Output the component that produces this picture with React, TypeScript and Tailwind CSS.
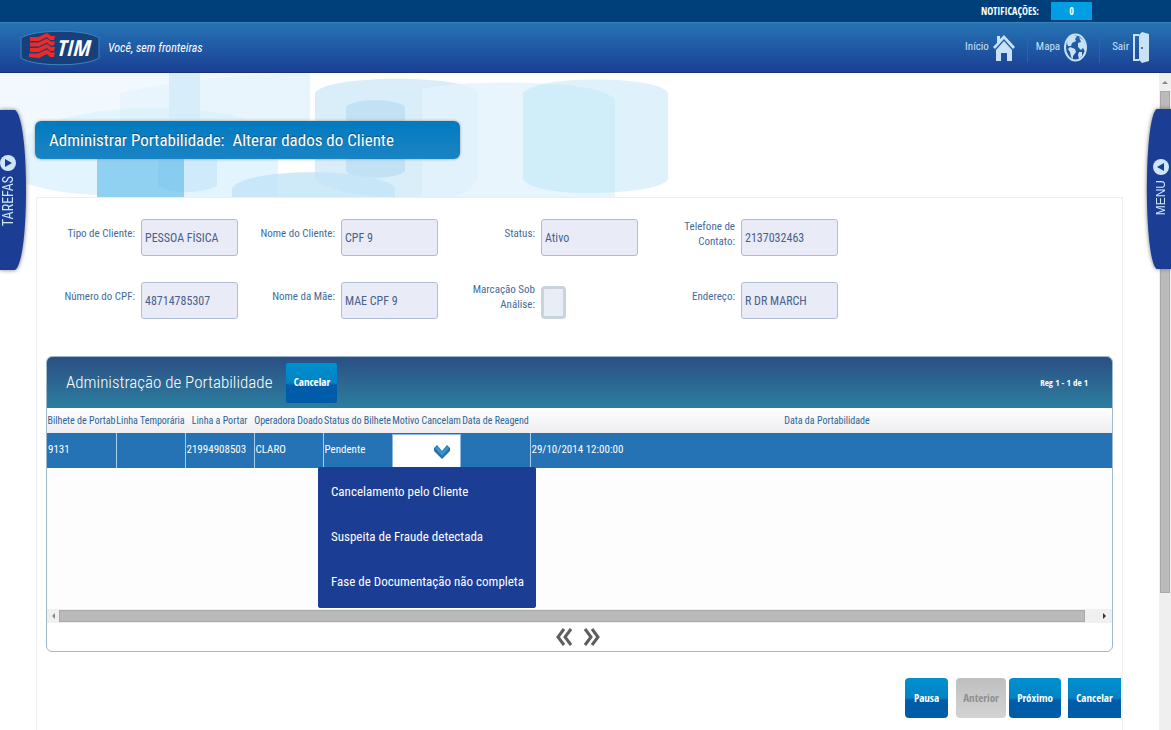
import { useState } from 'react';

const fields = [
  { id: 'tipo', label: 'Tipo de Cliente:', value: 'PESSOA FÍSICA' },
  { id: 'nome', label: 'Nome do Cliente:', value: 'CPF 9' },
  { id: 'status', label: 'Status:', value: 'Ativo' },
  { id: 'telefone', label: 'Telefone de Contato:', value: '2137032463', wrap: true },
  { id: 'cpf', label: 'Número do CPF:', value: '48714785307' },
  { id: 'mae', label: 'Nome da Mãe:', value: 'MAE CPF 9' },
  { id: 'analise', label: 'Marcação Sob Análise:', checkbox: true, wrap: true },
  { id: 'endereco', label: 'Endereço:', value: 'R DR MARCH' },
];

const columns = [
  'Bilhete de Portab',
  'Linha Temporária',
  'Linha a Portar',
  'Operadora Doado',
  'Status do Bilhete',
  'Motivo Cancelam',
  'Data de Reagend',
];

const motivos = ['Cancelamento pelo Cliente', 'Suspeita de Fraude detectada', 'Fase de Documentação não completa'];

function TimLogo() {
  return (
    <div className="relative h-9 w-20 shrink-0">
      <svg className="absolute inset-0" width="80" height="36" viewBox="0 0 80 36" fill="none">
        <path d="M1 8C14-1 66-1 79 8V28C66 37 14 37 1 28Z" fill="#163f7c" stroke="#3a86bd" />
        <g fill="#ee2a24">
          <path d="M10 7L18 7L27 3L31 6L35 6L34 10L30 10L27 7L19 11L10 11Z" />
          <path d="M10 12.500L18 12.500L27 8.500L31 11.500L35 11.500L34 15.500L30 15.500L27 12.500L19 16.500L10 16.500Z" />
          <path d="M10 18L18 18L27 14L31 17L35 17L34 21L30 21L27 18L19 22L10 22Z" />
          <path d="M9 23.500L18 23.500L27 19.500L31 22.500L35 22.500L34 27L30 27L27 24L19 28L9 27Z" />
        </g>
      </svg>
      <span className="absolute top-[3px] left-9 font-['Open_Sans_Condensed','Open_Sans',sans-serif] text-[22px] leading-7 font-bold text-white italic">
        TIM
      </span>
    </div>
  );
}

function HomeIcon() {
  return (
    <svg width="22" height="28" viewBox="0 0 22 28" fill="#c9e2f5">
      <path d="M0 13L4 9V2H7V5L11 1L22 13L20 15L11 5L2 15Z" />
      <path d="M3 16L11 7L19 16V27H14V19H8V27H3Z" />
    </svg>
  );
}

function GlobeIcon() {
  return (
    <svg width="23" height="29" viewBox="0 0 23 29">
      <ellipse cx="11.500" cy="14.500" rx="10.500" ry="13" fill="none" stroke="#c9e2f5" strokeWidth="2" />
      <path d="M4 6L9 2L13 3L11 6L12 8L8 10L7 13L4 13L3 10Z" fill="#c9e2f5" />
      <path d="M6 14L11 16L12 19L9 23L9 26L7 24L6 19L4 16Z" fill="#c9e2f5" />
      <path d="M15 4L19 7L22 13L21 18L19 15L17 17L14 14L14 10L17 9ZM15 19L18 19L18 23L15 26L14 22Z" fill="#c9e2f5" />
    </svg>
  );
}

function DoorIcon() {
  return (
    <svg width="16" height="31" viewBox="0 0 16 31">
      <path d="M6 3H1V28H6" fill="none" stroke="#c9e2f5" strokeWidth="2" />
      <path d="M6 3L9 0L16 2V29L9 31L6 28Z" fill="#c9e2f5" />
      <circle cx="9" cy="16" r="1" fill="#1b4f9c" />
    </svg>
  );
}

function Backdrop() {
  return (
    <svg className="absolute top-0 left-0" width="680" height="125" viewBox="0 0 680 125">
      <path d="M0 0H310V86H278V125H0Z" fill="#f1f9fe" />
      <path d="M120 20Q200 2 310 0V86H120Z" fill="#e8f5fc" />
      <rect x="169" width="31" height="50" fill="#d8edfa" />
      <path d="M28 62C70 26 240 26 278 62V125H28Z" fill="#d3effb" opacity=".5" />
      <path d="M0 100Q40 120 97 122V125H0Z" fill="#fff" />
      <path d="M315 20C325 1 470 1 478 20V106Q470 120 450 125H395Q330 122 315 106Z" fill="#daeefa" />
      <path d="M422 16C460 6 600 6 615 26V125H422Z" fill="#e2f3fc" opacity=".8" />
      <path d="M346 34C352 25 398 25 405 34V98C398 107 352 107 346 98Z" fill="#c2e1f4" />
      <path d="M184 85H217V113Q205 119 184 119Z" fill="#cfeafa" />
      <rect x="97" y="85" width="87" height="40" fill="#90d0f0" />
      <path d="M158 85H184V119Q170 119 158 113Z" fill="#88cdf0" />
      <path d="M232 115C245 94 380 94 395 115V125H232Z" fill="#c2e5f7" opacity=".8" />
      <path d="M523 20C533 2 660 2 668 20V106C660 124 533 124 523 106Z" fill="#dff1fb" />
      <path d="M523 20Q530 13 548 11Q600 13 615 26V119C570 122 530 118 523 106Z" fill="#d0edfa" />
    </svg>
  );
}

function ActionButton({ children, className = '', disabled }: { children: string; className?: string; disabled?: boolean }) {
  return (
    <button
      disabled={disabled}
      className={`h-10 shrink-0 font-['Open_Sans_Condensed','Open_Sans',sans-serif] text-[11px] font-bold ${
        disabled
          ? 'bg-linear-to-b from-[#bfbfbf] to-[#d3d3d3] text-[#8e8e8e]'
          : 'bg-linear-to-b from-[#0090cf] from-0% via-[#0084c6] via-50% to-[#005ca9] to-55% text-white'
      } ${className}`}
    >
      {children}
    </button>
  );
}

function SideTab({ side }: { side: 'left' | 'right' }) {
  const left = side === 'left';
  return (
    <button
      className={`absolute z-10 flex items-center justify-center ${
        left ? 'top-[109px] left-0 h-[162px] w-7' : 'top-[108px] right-0 h-[162px] w-[25px]'
      }`}
    >
      <svg
        className="absolute inset-0 h-full w-full overflow-visible drop-shadow-[0_0_2px_#777]"
        viewBox="0 0 28 162"
        preserveAspectRatio="none"
      >
        {left ? (
          <path d="M0 1H15C22 5 26 40 26 81S22 157 15 161H0Z" fill="#1b3d94" />
        ) : (
          <path d="M28 1H12C5 5 1 40 1 81S5 157 12 161H28Z" fill="#1b3d94" />
        )}
      </svg>
      <span className={`relative flex flex-col items-center gap-1 ${left ? 'mr-3' : 'mb-1 ml-1'}`}>
        <svg width="18" height="18" viewBox="0 0 18 18">
          <circle cx="9" cy="9" r="8" fill="#cfe6fa" />
          <path d={left ? 'M6 5L13 9L6 13Z' : 'M12 5L5 9L12 13Z'} fill="#1b3d94" />
        </svg>
        <span
          className={`rotate-180 leading-4 text-[#cfe6fa] [writing-mode:vertical-rl] ${
            left ? 'text-sm' : "font-['Liberation_Sans',sans-serif] text-xs"
          }`}
        >
          {left ? 'TAREFAS' : 'MENU'}
        </span>
      </span>
    </button>
  );
}

function Header() {
  return (
    <header>
      <div className="flex h-[22px] items-center justify-end gap-3 bg-[#00407a] pr-[79px] font-['Open_Sans_Condensed','Open_Sans',sans-serif] text-[10px] font-bold text-white">
        <span>NOTIFICAÇÕES:</span>
        <span className="flex h-[18px] w-[41px] items-center justify-center bg-[#009fe3]">0</span>
      </div>
      <div className="flex h-[51px] items-center border-t border-b border-t-[#3b82ba] border-b-[#12347c] bg-linear-to-b from-[#2674b4] to-[#1b3f94] pr-[22px] pl-5">
        <TimLogo />
        <span className="ml-2 text-xs text-white italic">Você, sem fronteiras</span>
        <nav className="ml-auto flex items-center text-[11px] text-[#c9e2f5]">
          <a href="#inicio" className="flex items-center gap-1 pr-3">
            Início <HomeIcon />
          </a>
          <a href="#mapa" className="flex items-center gap-1 border-l border-[#2765a9] pr-3 pl-2">
            Mapa <GlobeIcon />
          </a>
          <a href="#sair" className="flex items-center gap-1 border-l border-[#2765a9] pl-3">
            Sair <DoorIcon />
          </a>
        </nav>
      </div>
    </header>
  );
}

function PortabilityGrid() {
  const [motivo, setMotivo] = useState('');

  return (
    <section className="mx-[9px] mt-[37px] rounded-md border border-[#9fb8cb]">
      <div className="flex h-[51px] items-center rounded-t-[5px] bg-linear-to-b from-[#2b4f84] to-[#2b7e9f] pr-6 pl-[19px] text-white">
        <h2 className="font-['Roboto_Condensed_Light','Roboto_Condensed',sans-serif] text-[17px]">Administração de Portabilidade</h2>
        <ActionButton className="ml-[14px] w-[51px] rounded-xs">Cancelar</ActionButton>
        <span className="ml-auto font-['Open_Sans_Condensed','Open_Sans',sans-serif] text-[9px] font-bold">Reg 1 - 1 de 1</span>
      </div>
      <div className="h-[201px] bg-[#fdfdfd]">
        <table className="w-full table-fixed border-collapse">
          <thead>
            <tr className="h-[25px] bg-linear-to-b from-white to-[#ededf0] text-[10px] text-[#2c6496]">
              {columns.map((c) => (
                <th key={c} className="w-[69px] font-normal whitespace-nowrap">
                  {c}
                </th>
              ))}
              <th className="pl-3 font-normal">Data da Portabilidade</th>
            </tr>
          </thead>
          <tbody>
            <tr className="h-[35px] bg-[#2572b4] text-[11px] text-white">
              <td className="border-r border-[#a9cdea] px-px">9131</td>
              <td className="border-r border-[#a9cdea]" />
              <td className="border-r border-[#a9cdea] px-px">21994908503</td>
              <td className="border-r border-[#a9cdea] px-px">CLARO</td>
              <td className="px-px">Pendente</td>
              <td>
                <div className="relative">
                  <select
                    aria-label="Motivo Cancelamento"
                    value={motivo}
                    onChange={(e) => setMotivo(e.target.value)}
                    className="block h-[34px] w-full appearance-none border border-[#8ab6e6] bg-white pl-1 text-[#1b3d94]"
                  >
                    <option value="" />
                    {motivos.map((m) => (
                      <option key={m}>{m}</option>
                    ))}
                  </select>
                  <svg className="pointer-events-none absolute top-[11px] right-[11px]" width="16" height="14" viewBox="0 0 16 14">
                    <path d="M0 3L3 0L8 6L13 0L16 3V6L8 14L0 6Z" fill="#2c6fa5" />
                    <path d="M1 3L3 1L8 7L13 1L15 3L8 11Z" fill="#3596d6" />
                  </svg>
                  <ul className="absolute top-[33px] -left-[74px] z-10 w-[218px] rounded-xs border border-[#16409c] bg-[#1b3d94] py-[2px] text-[13px]">
                    {motivos.map((m) => (
                      <li key={m}>
                        <button onClick={() => setMotivo(m)} className="h-[45px] w-full pl-3 text-left whitespace-nowrap">
                          {m}
                        </button>
                      </li>
                    ))}
                  </ul>
                </div>
              </td>
              <td className="border-r border-[#a9cdea]" />
              <td className="px-px">29/10/2014 12:00:00</td>
            </tr>
          </tbody>
        </table>
      </div>
      <div className="flex h-[14px] items-center bg-[#f0f0f0]">
        <svg width="12" height="8" viewBox="0 0 12 8">
          <path d="M8 1L5 4L8 7Z" fill="#888" />
        </svg>
        <div className="mr-[11px] h-3 flex-1 border border-[#a8a8a8] bg-[#bababa]" />
        <svg width="16" height="8" viewBox="0 0 16 8">
          <path d="M7 1L10 4L7 7Z" fill="#333" />
        </svg>
      </div>
      <div className="flex h-7 items-center justify-center gap-3 pr-1">
        <button aria-label="Página anterior">
          <svg width="16" height="18" viewBox="0 0 16 18" fill="none" stroke="#5e5e5e" strokeWidth="3">
            <path d="M8 1L2 9L8 17M15 1L9 9L15 17" />
          </svg>
        </button>
        <button aria-label="Próxima página">
          <svg width="16" height="18" viewBox="0 0 16 18" fill="none" stroke="#5e5e5e" strokeWidth="3">
            <path d="M1 1L7 9L1 17M8 1L14 9L8 17" />
          </svg>
        </button>
      </div>
    </section>
  );
}

export default function App() {
  return (
    <div className="relative flex h-screen flex-col overflow-hidden bg-white font-['Roboto_Condensed','Liberation_Sans',sans-serif]">
      <Header />
      <SideTab side="left" />
      <SideTab side="right" />
      <div className="flex min-h-0 flex-1">
        <main className="relative flex min-w-0 flex-1 flex-col pr-9 pl-9">
          <Backdrop />
          <h1 className="relative mt-12 -ml-px h-[38px] w-[425px] rounded-md bg-linear-to-b from-[#007ac0] to-[#1a84c4] pl-[14px] text-[17px] leading-[38px] whitespace-pre text-white shadow-[0_0_3px_#999] [text-shadow:0_-1px_1px_#1238]">
            {'Administrar Portabilidade:  Alterar dados do Cliente'}
          </h1>
          <div className="relative mt-[38px] flex-1 border border-b-0 border-[#eeeeee] bg-white">
            <form className="mt-[21px] ml-px grid grid-cols-[repeat(4,200px)] gap-y-[26px] text-xs text-[#3f6b9b]">
              {fields.map((f) => (
                <div key={f.id} className="flex h-[37px] justify-end gap-[6px]">
                  <label
                    htmlFor={f.id}
                    className={`text-right text-[11px] leading-[15px] ${f.wrap ? 'w-[66px]' : 'mt-[7px] whitespace-nowrap'}`}
                  >
                    {f.label}
                  </label>
                  {f.checkbox ? (
                    <div className="w-[97px]">
                      <input
                        id={f.id}
                        type="checkbox"
                        className="mt-1 block h-[33px] w-[25px] appearance-none rounded-sm border-3 border-[#c9d3da] bg-[#e9edf6]"
                      />
                    </div>
                  ) : (
                    <input
                      id={f.id}
                      readOnly
                      value={f.value}
                      className="h-[37px] w-[97px] rounded-[3px] border border-[#aebcd3] bg-[#e9ecf6] px-[3px] text-[#4a5f8d]"
                    />
                  )}
                </div>
              ))}
            </form>
            <PortabilityGrid />
            <div className="mt-[26px] mr-px flex justify-end">
              <ActionButton className="w-[43px] rounded-sm">Pausa</ActionButton>
              <ActionButton className="ml-2 w-[50px] rounded-sm" disabled>
                Anterior
              </ActionButton>
              <ActionButton className="ml-[3px] w-[52px] rounded-sm">Próximo</ActionButton>
              <ActionButton className="ml-[7px] w-[53px]">Cancelar</ActionButton>
            </div>
          </div>
        </main>
        <div className="flex w-3 flex-col bg-[#efefef]">
          <svg width="12" height="18" viewBox="0 0 12 18">
            <path d="M3 11L6 8L9 11Z" fill="#888" />
          </svg>
          <div className="mx-px h-[502px] border border-[#a8a8a8] bg-[#bababa]" />
        </div>
      </div>
    </div>
  );
}
